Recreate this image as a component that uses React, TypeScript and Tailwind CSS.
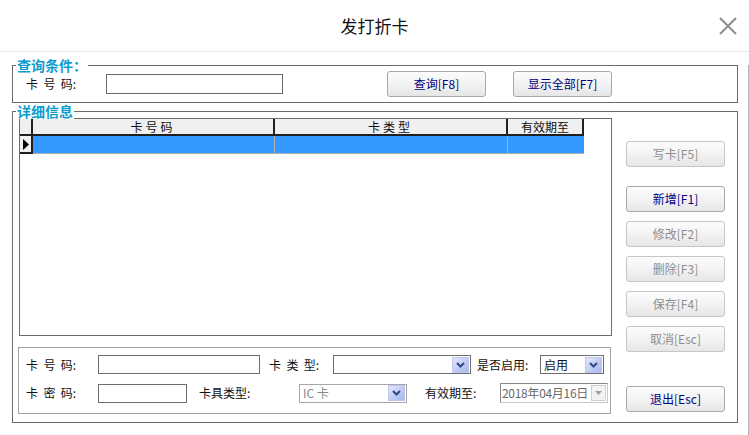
import clsx from "clsx";

const FONT = "font-['Noto_Sans_CJK_SC','Noto_Sans',sans-serif]";

function Btn({ children, disabled }: { children: React.ReactNode; disabled?: boolean }) {
  return (
    <button
      className={clsx(
        "h-[26px] w-[99px] shrink-0 rounded-[3px] border text-[12px] leading-none bg-linear-to-b from-[#fcfcfc] via-[#f3f3f3] to-[#e6e6e6]",
        disabled ? "border-[#c6c6c6] text-[#8e8e8e]" : "border-[#a8a8a8] text-[#000080]"
      )}
    >
      {children}
    </button>
  );
}

function DropBtn() {
  return (
    <span className="mr-px flex h-[16px] w-[17px] items-center justify-center border border-[#bcc6ef] bg-linear-to-br from-[#e2e7fd] to-[#a7b6ec]">
      <svg width="9" height="6" viewBox="0 0 9 6">
        <path d="M1 1 L4.5 4.5 L8 1" stroke="#2b4a85" strokeWidth="2" fill="none" />
      </svg>
    </span>
  );
}

function Select({ w, text, muted }: { w: string; text?: string; muted?: boolean }) {
  return (
    <div
      className={clsx(
        "flex h-[19px] shrink-0 items-center justify-between border bg-white",
        w,
        muted ? "border-[#a6a6a6] text-[#8a8a8a]" : "border-[#6e6e6e] text-[#111]"
      )}
    >
      <span className="pl-[3px] text-[12px] leading-none">{text}</span>
      <DropBtn />
    </div>
  );
}

function Label({ w, children }: { w: string; children: React.ReactNode }) {
  return <span className={clsx("shrink-0 text-[12px] leading-none text-[#111]", w)}>{children}</span>;
}

const headCell = "flex items-center justify-center border-r-2 border-b-2 border-[#202020] bg-[#f0f0f0]";

export default function App() {
  return (
    <div className={clsx("h-[435px] w-[749px] overflow-hidden bg-white", FONT)}>
      {/* title bar */}
      <div className="flex h-[52px] items-center border-b border-[#e6e6e6]">
        <div className="w-[60px]" />
        <div className="flex-1 text-center text-[17px] text-[#111]">发打折卡</div>
        <div className="flex w-[60px] justify-end pr-[11px]">
          <svg width="20" height="20" viewBox="0 0 20 20">
            <path d="M2 2 L18 18 M18 2 L2 18" stroke="#8c8c8c" strokeWidth="2" />
          </svg>
        </div>
      </div>

      <div className="h-[383px] border-r border-b border-[#b4b4b4]">
        {/* 查询条件 */}
        <div className="relative ml-[12px] mt-[13px] flex h-[38px] w-[726px] items-center border border-[#6a6a6a] pl-[13px]">
          <span className="absolute left-[3px] top-[-9px] bg-white px-px text-[14px] font-bold leading-[16px] text-[#0d9ccd]">
            查询条件：
          </span>
          <Label w="w-[80px]">卡&nbsp;&nbsp;号&nbsp;&nbsp;码:</Label>
          <input className="h-[20px] w-[177px] border border-[#6a6a6a] outline-none" />
          <div className="ml-[104px] flex gap-[27px]">
            <Btn>查询[F8]</Btn>
            <Btn>显示全部[F7]</Btn>
          </div>
        </div>

        {/* 详细信息 */}
        <div className="relative ml-[12px] mt-[8px] flex h-[312px] w-[726px] border border-[#6a6a6a]">
          <span className="absolute left-[3px] top-[-9px] bg-white px-px text-[14px] font-bold leading-[16px] text-[#0d9ccd]">
            详细信息
          </span>

          <div className="flex flex-col pl-[5px] pt-[6px]">
            {/* grid */}
            <div className="ml-px h-[218px] w-[593px] border border-[#6a6a6a] bg-white">
              <div className="flex h-[17px] text-[12px] leading-none text-[#111]">
                <div className={clsx(headCell, "w-[13px]")} />
                <div className={clsx(headCell, "w-[242px] tracking-[3px]")}>卡号码</div>
                <div className={clsx(headCell, "w-[233px] tracking-[3px]")}>卡类型</div>
                <div className={clsx(headCell, "w-[76px]")}>有效期至</div>
              </div>
              <div className="flex h-[18px]">
                <div className={clsx(headCell, "w-[13px]")}>
                  <svg width="6" height="11" viewBox="0 0 6 11">
                    <path d="M0 0 L6 5.5 L0 11 Z" fill="#000" />
                  </svg>
                </div>
                <div className="w-[242px] border-r border-b border-[#b0b0b0] bg-[#3399ff]" />
                <div className="w-[233px] border-r border-b border-[#b0b0b0] bg-[#3399ff]" />
                <div className="w-[76px] border-b border-[#b0b0b0] bg-[#3399ff]" />
              </div>
            </div>

            {/* edit panel */}
            <div className="mt-[11px] flex h-[67px] w-[593px] flex-col gap-[9px] border border-[#a2a2a2] pl-[7px] pt-[7px]">
              <div className="flex items-center">
                <Label w="w-[72px]">卡&nbsp;&nbsp;号&nbsp;&nbsp;码:</Label>
                <input className="h-[19px] w-[162px] border border-[#6e6e6e] outline-none" />
                <span className="w-[9px]" />
                <Label w="w-[64px]">卡&nbsp;&nbsp;类&nbsp;&nbsp;型:</Label>
                <Select w="w-[138px]" />
                <span className="w-[6px]" />
                <Label w="w-[63px]">是否启用:</Label>
                <Select w="w-[64px]" text="启用" />
              </div>
              <div className="flex items-center">
                <Label w="w-[72px]">卡&nbsp;&nbsp;密&nbsp;&nbsp;码:</Label>
                <input className="h-[19px] w-[89px] border border-[#6e6e6e] outline-none" />
                <span className="w-[12px]" />
                <Label w="w-[100px]">卡具类型:</Label>
                <Select w="w-[108px]" text="IC 卡" muted />
                <span className="w-[18px]" />
                <Label w="w-[75px]">有效期至:</Label>
                <div className="flex h-[20px] w-[108px] items-center justify-between border border-t-[#8a8a8a] border-l-[#8a8a8a] border-r-[#c8c8c8] border-b-[#c8c8c8] bg-white">
                  <span className="whitespace-nowrap pl-px text-[12px] leading-none tracking-[-0.3px] text-[#6a6a6a]">
                    2018年04月16日
                  </span>
                  <span className="mr-px flex h-[16px] w-[15px] shrink-0 items-center justify-center border border-[#cfcfcf] bg-[#f2f2f2]">
                    <svg width="7" height="4" viewBox="0 0 7 4">
                      <path d="M0 0 L7 0 L3.5 4 Z" fill="#a0a0a0" />
                    </svg>
                  </span>
                </div>
              </div>
            </div>
          </div>

          {/* action buttons */}
          <div className="ml-[14px] flex flex-col pt-[29px]">
            <Btn disabled>写卡[F5]</Btn>
            <div className="mt-[19px] flex flex-col gap-[9px]">
              <Btn>新增[F1]</Btn>
              <Btn disabled>修改[F2]</Btn>
              <Btn disabled>删除[F3]</Btn>
              <Btn disabled>保存[F4]</Btn>
              <Btn disabled>取消[Esc]</Btn>
            </div>
            <div className="mt-[33px]">
              <Btn>退出[Esc]</Btn>
            </div>
          </div>
        </div>
      </div>
    </div>
  );
}
